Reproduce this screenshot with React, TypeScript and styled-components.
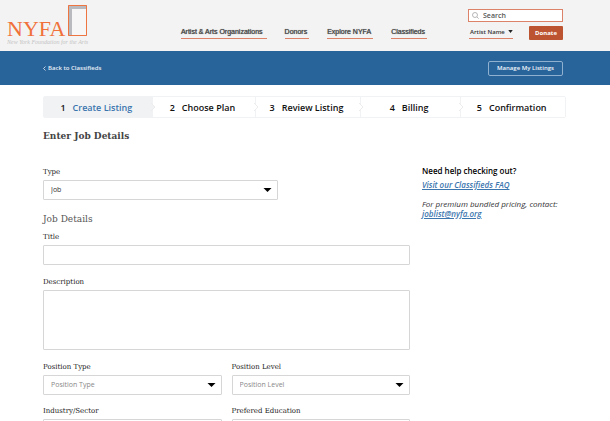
import React from "react";
import styled, { createGlobalStyle } from "styled-components";

const sans = '"Open Sans", "Noto Sans", sans-serif';
const slab = '"DejaVu Serif", "Liberation Serif", serif';
const slabHeading = '"DejaVu Serif Condensed", "DejaVu Serif", serif';

const GlobalStyle = createGlobalStyle`
  *, *::before, *::after { box-sizing: border-box; }
  html { scrollbar-width: none; }
  body { margin: 0; background: #fff; color: #111; font: 8px/12px ${sans}; }
  input, select, textarea, button { font: inherit; color: inherit; margin: 0; }
`;

const Header = styled.header`
  display: flex;
  height: 51px;
  padding-right: 47px;
  background: #f3f3f3;
`;

const LogoLink = styled.a`
  display: block;
  margin-left: 7px;
  svg { display: block; }
`;

const Nav = styled.nav`
  display: flex;
  gap: 18px;
  margin: 26px 41px 0 auto;
  height: 13px;
`;

const NavLink = styled.a<{ $space?: number }>`
  padding-right: ${(p) => p.$space ?? 2}px;
  border-bottom: 1px solid #dc8268;
  font: 7px/12px "Liberation Sans", Arial, sans-serif;
  text-shadow: 0 0 0 #666, 0 0 1px #888;
  white-space: nowrap;
  text-decoration: none;
  color: #505050;
`;

const Tools = styled.div`
  width: 95px;
  padding-top: 9px;
`;

const SearchBox = styled.label`
  display: flex;
  align-items: center;
  gap: 4px;
  height: 13px;
  padding-left: 3px;
  border: 1px solid #dc8268;
  background: #fff;
  svg { flex: none; }
`;

const SearchInput = styled.input`
  flex: 1;
  min-width: 0;
  height: 11px;
  padding: 0;
  border: 0;
  outline: 0;
  background: transparent;
  font-size: 7px;
  line-height: 11px;
  &::placeholder { color: #555; opacity: 1; font-weight: 600; }
`;

const AccountRow = styled.div`
  display: flex;
  justify-content: space-between;
  align-items: flex-start;
  margin-top: 4px;
`;

const AccountButton = styled.button`
  display: flex;
  align-items: center;
  gap: 3px;
  height: 13px;
  margin-left: 1px;
  padding: 0 0 1px 1px;
  border: 0;
  border-bottom: 1px solid #dc8268;
  background: transparent;
  font-size: 6px;
  font-weight: 600;
  white-space: nowrap;
  color: #333;
`;

const DonateButton = styled.button`
  width: 34px;
  height: 14px;
  padding: 0;
  border: 0;
  border-radius: 1px;
  background: #bc5431;
  font-size: 6px;
  font-weight: 700;
  color: #fff;
`;

const SubBar = styled.div`
  display: flex;
  align-items: center;
  justify-content: space-between;
  height: 34px;
  padding: 0 47px 0 43px;
  background: #28639a;
  color: #fff;
`;

const BackLink = styled.a`
  display: flex;
  align-items: center;
  gap: 2px;
  font-size: 6px;
  font-weight: 600;
  text-decoration: none;
  color: #e8eff6;
`;

const ManageButton = styled.button`
  width: 75px;
  height: 15px;
  padding: 0;
  border: 1px solid #8fb0ce;
  border-radius: 2px;
  background: transparent;
  font-size: 6px;
  font-weight: 600;
  color: #f2f6fa;
`;

const Page = styled.div`
  padding: 11px 44px 24px 43px;
`;

const Steps = styled.ol`
  display: grid;
  grid-template-columns: 108fr 104fr 105fr 101fr 105fr;
  height: 22px;
  margin: 0;
  padding: 0;
  border: 1px solid #f1f2f4;
  border-radius: 2px;
  list-style: none;
`;

const Step = styled.li<{ $current?: boolean }>`
  position: relative;
  display: flex;
  align-items: center;
  justify-content: center;
  gap: 7px;
  padding: 1px 3px 0 0;
  background: ${(p) => (p.$current ? "#f1f2f4" : "#fff")};
  font-size: 9px;
  font-weight: 600;
  white-space: nowrap;
  & + & { border-left: 1px solid #f1f2f4; }
  span { color: ${(p) => (p.$current ? "#3a75ae" : "#111")}; }
`;

const Notch = styled.svg`
  position: absolute;
  z-index: 1;
  top: 6px;
  right: -4px;
`;

const PageTitle = styled.h1`
  margin: 10px 0 0;
  font: bold 10px/16px ${slabHeading};
  color: #444;
`;

const Columns = styled.div`
  display: grid;
  grid-template-columns: minmax(0, 1fr) 144px;
  gap: 12px;
  margin-top: 22px;
`;

const Form = styled.form`
  display: flex;
  flex-direction: column;
`;

const Field = styled.div<{ $space?: number; $narrow?: boolean }>`
  width: ${(p) => (p.$narrow ? "64%" : "100%")};
  margin-top: ${(p) => p.$space ?? 0}px;
`;

const Label = styled.label`
  display: block;
  height: 14px;
  font: 7px/12px ${slab};
  color: #222;
`;

const SectionTitle = styled.h2`
  margin: 11px 0 4px;
  font: 10px/16px ${slabHeading};
  color: #555;
`;

const TextInput = styled.input`
  display: block;
  width: 100%;
  height: 20px;
  padding: 0 7px;
  border: 1px solid #d6d6d6;
  border-radius: 1px;
  background: #fff;
`;

const TextArea = styled.textarea`
  display: block;
  width: 100%;
  height: 60px;
  padding: 4px 7px;
  border: 1px solid #d6d6d6;
  border-radius: 1px;
  resize: none;
`;

const SelectWrap = styled.div`
  display: grid;
  align-items: center;
  > * { grid-area: 1 / 1; }
  svg { justify-self: end; margin-right: 6px; pointer-events: none; }
`;

const Select = styled.select<{ $filled?: boolean }>`
  width: 100%;
  height: 20px;
  padding: 0 20px 0 7px;
  border: 1px solid #d6d6d6;
  border-radius: 1px;
  appearance: none;
  background: #fff;
  font-size: 7px;
  color: ${(p) => (p.$filled ? "#333" : "#888")};
`;

const Pair = styled.div<{ $space: number }>`
  display: grid;
  grid-template-columns: 1fr 1fr;
  gap: 10px;
  margin-top: ${(p) => p.$space}px;
`;

const Aside = styled.aside`
  font-size: 8px;
  line-height: 10px;
  color: #333;
`;

const AsideTitle = styled.h2`
  margin: 0;
  font-size: 8px;
  line-height: 10px;
  font-weight: 600;
  color: #000;
`;

const AsideText = styled.p<{ $space: number }>`
  margin: ${(p) => p.$space}px 0 0;
  font-style: italic;
  white-space: nowrap;
`;

const AsideLink = styled.a`
  font-weight: 600;
  color: #3a75ae;
`;

function Logo() {
  return (
    <svg width="84" height="51" viewBox="0 0 84 51" role="img" aria-label="NYFA, New York Foundation for the Arts">
      <path d="M61 5h19v31H61z" fill="#b9bac0" />
      <path d="M65 9h14v26H65z" fill="#f6f6f6" />
      <path d="M61.5 5.5h18v30h-18z" fill="none" stroke="#ee7540" />
      <text x="0" y="36" fontFamily="Liberation Serif, serif" fontSize="22" fill="#f0713a">NYFA</text>
      <text x="0" y="44" fontFamily="Liberation Serif, serif" fontSize="6" fontStyle="italic" fill="#c4c4c4">
        New York Foundation for the Arts
      </text>
    </svg>
  );
}

function Caret({ small = false }: { small?: boolean }) {
  return (
    <svg width={small ? 5 : 9} height={small ? 3 : 4} viewBox="0 0 9 4" preserveAspectRatio="none" aria-hidden="true">
      <path d="M0.5 0h8L4.5 4z" fill={small ? "#222" : "#000"} />
    </svg>
  );
}

type SelectFieldProps = { id: string; label: string; value: string; filled?: boolean; narrow?: boolean };

function SelectField({ id, label, value, filled, narrow }: SelectFieldProps) {
  return (
    <Field $narrow={narrow}>
      <Label htmlFor={id}>{label}</Label>
      <SelectWrap>
        <Select id={id} $filled={filled}>
          <option>{value}</option>
        </Select>
        <Caret />
      </SelectWrap>
    </Field>
  );
}

const steps = ["Create Listing", "Choose Plan", "Review Listing", "Billing", "Confirmation"];

export default function App() {
  return (
    <>
      <GlobalStyle />
      <Header>
        <LogoLink href="#home"><Logo /></LogoLink>
        <Nav>
          <NavLink href="#artists" $space={4}>Artist &amp; Arts Organizations</NavLink>
          <NavLink href="#donors">Donors</NavLink>
          <NavLink href="#explore">Explore NYFA</NavLink>
          <NavLink href="#classifieds">Classifieds</NavLink>
        </Nav>
        <Tools>
          <SearchBox>
            <svg width="7" height="7" viewBox="0 0 7 7" fill="none" stroke="#888" strokeWidth="0.6" aria-hidden="true">
              <circle cx="3" cy="3" r="2.5" />
              <path d="M5 5l1.7 1.7" />
            </svg>
            <SearchInput type="text" placeholder="Search" aria-label="Search" />
          </SearchBox>
          <AccountRow>
            <AccountButton type="button">Artist Name <Caret small /></AccountButton>
            <DonateButton type="button">Donate</DonateButton>
          </AccountRow>
        </Tools>
      </Header>
      <SubBar>
        <BackLink href="#classifieds">
          <svg width="3" height="5" viewBox="0 0 3 5" fill="none" stroke="#e8eff6" strokeWidth="0.8" aria-hidden="true">
            <path d="M2.5 0.5l-2 2 2 2" />
          </svg>
          Back to Classifieds
        </BackLink>
        <ManageButton type="button">Manage My Listings</ManageButton>
      </SubBar>
      <Page>
        <Steps>
          {steps.map((name, i) => (
            <Step key={name} $current={i === 0} aria-current={i === 0 ? "step" : undefined}>
              {i + 1} <span>{name}</span>
              {i < steps.length - 1 && (
                <Notch width="5" height="8" viewBox="0 0 5 8" aria-hidden="true">
                  <path d="M0 0l4 4-4 4" fill={i === 0 ? "#f1f2f4" : "#fff"} stroke="#ebecee" />
                </Notch>
              )}
            </Step>
          ))}
        </Steps>
        <PageTitle>Enter Job Details</PageTitle>
        <Columns>
          <Form>
            <SelectField id="type" label="Type" value="Job" filled narrow />
            <SectionTitle>Job Details</SectionTitle>
            <Field>
              <Label htmlFor="title">Title</Label>
              <TextInput id="title" type="text" />
            </Field>
            <Field $space={11}>
              <Label htmlFor="description">Description</Label>
              <TextArea id="description" />
            </Field>
            <Pair $space={11}>
              <SelectField id="position-type" label="Position Type" value="Position Type" />
              <SelectField id="position-level" label="Position Level" value="Position Level" />
            </Pair>
            <Pair $space={10}>
              <SelectField id="industry" label="Industry/Sector" value="Industry/Sector" />
              <SelectField id="education" label="Prefered Education" value="Prefered Education" />
            </Pair>
          </Form>
          <Aside>
            <AsideTitle>Need help checking out?</AsideTitle>
            <AsideText $space={4}><AsideLink href="#faq">Visit our Classifieds FAQ</AsideLink></AsideText>
            <AsideText $space={9}>
              For premium bundled pricing, contact:<br />
              <AsideLink href="mailto:joblist@nyfa.org">joblist@nyfa.org</AsideLink>
            </AsideText>
          </Aside>
        </Columns>
      </Page>
    </>
  );
}
